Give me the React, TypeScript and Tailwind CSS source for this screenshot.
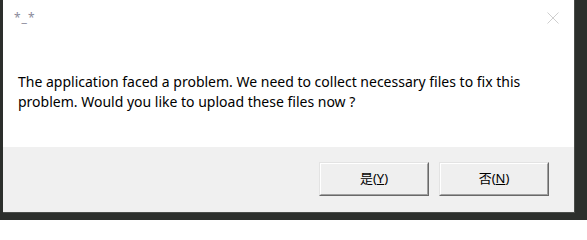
export default function App() {
  return (
    <div className="relative h-[220px] w-[587px] overflow-hidden bg-[#2c2f2c]" style={{ fontFamily: '"Noto Sans", "Noto Sans CJK SC", sans-serif' }}>
      <div className="ml-[3px] flex h-[213px] w-[572px] flex-col border-r border-b border-[#4a4d4a] bg-white">
        <div className="flex h-[44px] items-start justify-between">
          <span className="ml-[11px] mt-[8px] text-[12px] leading-[20px] tracking-[1px] text-[#8a8a9a]">*_*</span>
          <svg className="mr-[15px] mt-[12px]" width="12" height="12" viewBox="0 0 12 12">
            <path d="M0.5 0.5 L11.5 11.5 M11.5 0.5 L0.5 11.5" stroke="#cfcfcf" strokeWidth="1" />
          </svg>
        </div>
        <div className="h-[103px] pl-[15px] pt-[28px]">
          <p className="text-[14px] leading-[20px] text-black">
            The application faced a problem. We need to collect necessary files to fix this
            <br />
            problem. Would you like to upload these files now ?
          </p>
        </div>
        <div className="flex flex-1 justify-end gap-[10px] bg-[#f0f0f0] pr-[25px] pt-[15px]">
          <Button label="是" hot="Y" />
          <Button label="否" hot="N" />
        </div>
      </div>
    </div>
  );
}

function Button({ label, hot }: { label: string; hot: string }) {
  return (
    <div className="h-[34px] w-[110px] border border-t-[#e3e3e3] border-l-[#e3e3e3] border-r-[#696969] border-b-[#696969]">
      <div className="flex h-full w-full items-center justify-center border border-t-white border-l-white border-r-[#a0a0a0] border-b-[#a0a0a0] bg-[#efefef] text-[13px] text-black">
        {label}(<span className="underline">{hot}</span>)
      </div>
    </div>
  );
}
